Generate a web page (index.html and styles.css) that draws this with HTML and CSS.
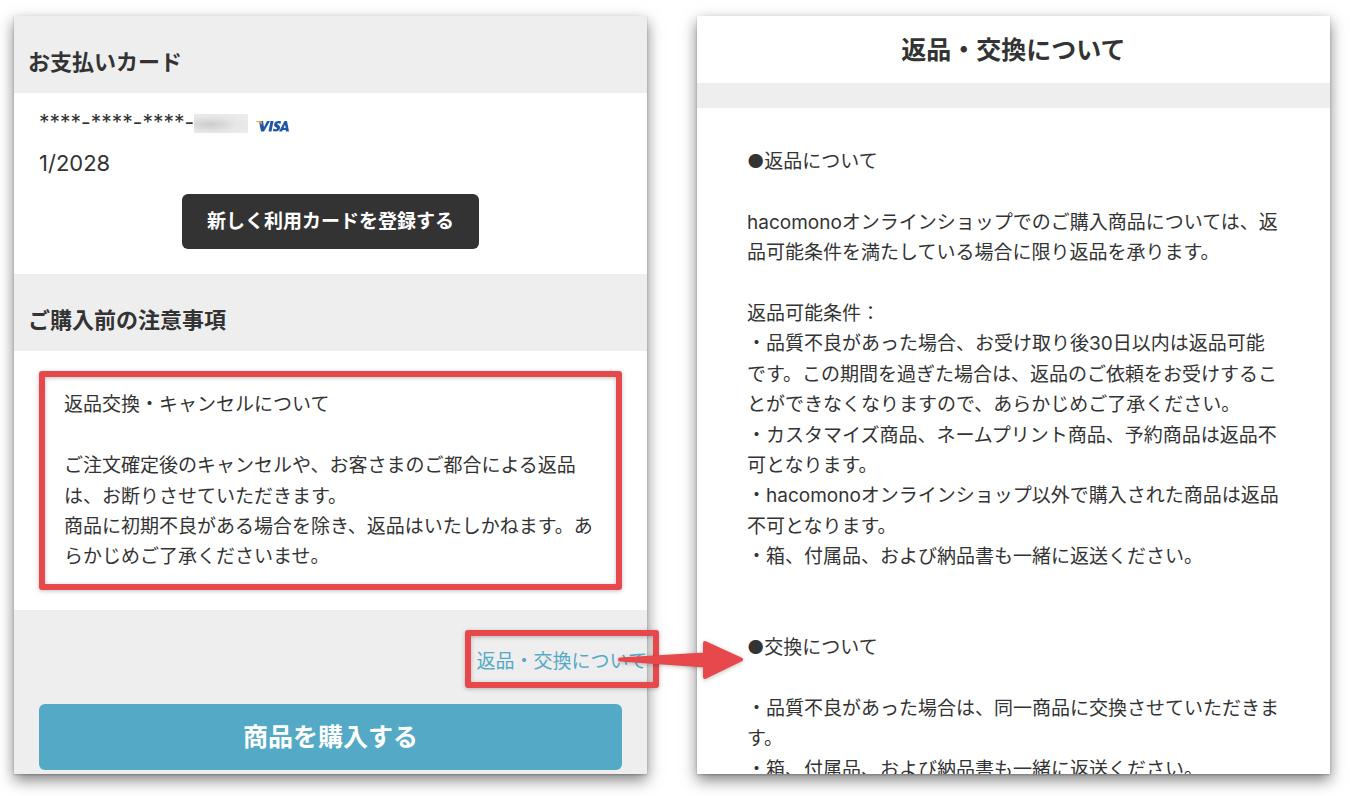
FILE: index.html
```html
<!DOCTYPE html>
<html lang="ja">
<head>
    <meta charset="UTF-8">
    <meta name="viewport" content="width=device-width, initial-scale=1.0">
    <title>返品・交換について</title>
    <link rel="stylesheet" href="styles.css">
</head>
<body>

<div class="container">
    <main class="panel">
        <h2 class="section-title">お支払いカード</h2>
        <section class="card-info">
            <div class="card-number">
                <span>****-****-****-</span>
                <span class="masked"></span>
                <svg class="visa" viewBox="0 0 34 12" role="img" aria-label="VISA">
                    <path fill="#1f56a8" d="M4 1h4l1 6 3-6h3L9 11.500H6zM15.500 1h3l-2 10.500h-3zM26 1.300l-.5 2.400c-1.500-.7-3.300-.7-3.400.1 0 .9 3.400 1.400 3 4.300-.5 3.300-4.200 4-7.200 3l.5-2.500c1.500.8 3.600.9 3.700-.1.100-1-3.400-1.300-3-4.200C19.600.900 23.300.400 26 1.300zM29.500 1H32l2 10.500h-3l-.2-1.500h-3l-.8 1.500h-3zM30 4.500L28.700 8h1.900z"/>
                    <path fill="#e5a33a" d="M1 1h5.500l1 4.500C6 3.500 4 2 1 1.500z"/>
                </svg>
            </div>
            <div>1/2028</div>
            <button type="button" class="btn-dark">新しく利用カードを登録する</button>
        </section>

        <h2 class="section-title">ご購入前の注意事項</h2>
        <section class="notice">
            <p>返品交換・キャンセルについて</p>
            <br>
            <p>ご注文確定後のキャンセルや、お客さまのご都合による返品は、お断りさせていただきます。</p>
            <p>商品に初期不良がある場合を除き、返品はいたしかねます。あらかじめご了承くださいませ。</p>
        </section>

        <footer class="purchase">
            <a href="#returns" class="returns-link">返品・交換について
                <svg class="arrow" viewBox="0 0 128 40" aria-hidden="true">
                    <path d="M3 19.500L88 14.500V3L124 19.500L88 37V25.500z"/>
                </svg>
            </a>
            <button type="button" class="btn-buy">商品を購入する</button>
        </footer>
    </main>

    <article class="panel policy" id="returns">
        <h1 class="policy-title">返品・交換について</h1>
        <div class="policy-body">
            <p>●返品について</p>
            <br>
            <p>hacomonoオンラインショップでのご購入商品については、返品可能条件を満たしている場合に限り返品を承ります。</p>
            <br>
            <p>返品可能条件：</p>
            <p>・品質不良があった場合、お受け取り後30日以内は返品可能です。この期間を過ぎた場合は、返品のご依頼をお受けすることができなくなりますので、あらかじめご了承ください。</p>
            <p>・カスタマイズ商品、ネームプリント商品、予約商品は返品不可となります。</p>
            <p>・hacomonoオンラインショップ以外で購入された商品は返品不可となります。</p>
            <p>・箱、付属品、および納品書も一緒に返送ください。</p>
            <br>
            <br>
            <p>●交換について</p>
            <br>
            <p>・品質不良があった場合は、同一商品に交換させていただきます。</p>
            <p>・箱、付属品、および納品書も一緒に返送ください。</p>
        </div>
    </article>
</div>

</body>
</html>
```

FILE: styles.css
```css
* {
    box-sizing: border-box;
}

body {
    font-family: Inter, "Noto Sans CJK JP", sans-serif;
    font-size: 19px;
    line-height: 1.6;
    color: #333;
    background-color: #fff;
    margin: 0;
}

h1,
h2,
p {
    margin: 0;
}

button {
    font-family: inherit;
    font-weight: bold;
    color: #fff;
    border: none;
    border-radius: 6px;
    cursor: pointer;
}

.container {
    display: grid;
    grid-template-columns: 1fr 1fr;
    gap: 50px;
    height: 100vh;
    padding: 16px 20px 22px 14px;
}

.panel {
    min-height: 0;
    background-color: #eee;
    box-shadow: 0 1px 2px rgba(0, 0, 0, 0.2), 0 6px 14px rgba(0, 0, 0, 0.5);
}

.section-title {
    font-size: 22px;
    padding: 29px 14px 13px;
}

.card-info {
    background-color: #fff;
    padding: 11px 25px 25px;
    font-size: 22px;
    line-height: 38px;
}

.card-number {
    display: flex;
    align-items: center;
    margin-bottom: 2px;
    font-size: 21px;
}

.masked {
    width: 54px;
    height: 19px;
    margin-right: 7px;
    background: radial-gradient(ellipse at 30% 55%, #ccc, #e6e6e6 50%, #eee);
}

.visa {
    width: 34px;
    height: 12px;
    margin-top: 6px;
}

.btn-dark {
    display: block;
    margin: 12px auto 0;
    padding: 12px 25px;
    font-size: 19px;
    line-height: 31px;
    background-color: #333;
}

.notice {
    position: relative;
    background-color: #fff;
    padding: 39px 50px 37px;
}

/* red highlight frames */
.notice::after,
.returns-link::after {
    content: "";
    position: absolute;
    border: 6px solid #e6484b;
    border-radius: 3px;
    filter: drop-shadow(0 1px 2px rgba(0, 0, 0, 0.25));
    pointer-events: none;
}

.notice::after {
    inset: 20px 25px;
}

.purchase {
    display: flex;
    flex-direction: column;
    align-items: flex-end;
    gap: 27px;
    padding-top: 37px;
}

.returns-link {
    position: relative;
    z-index: 1;
    color: #54aac6;
    text-decoration: none;
}

.returns-link::after {
    inset: -17px -12px -11px;
}

.arrow {
    position: absolute;
    left: 140px;
    top: -7px;
    z-index: 1;
    width: 128px;
    height: 40px;
    overflow: visible;
    fill: #e6484b;
    stroke: #e6484b;
    stroke-width: 4;
    stroke-linejoin: round;
    filter: drop-shadow(0 1px 2px rgba(0, 0, 0, 0.25));
}

.btn-buy {
    align-self: stretch;
    margin: 0 25px;
    padding: 13px;
    font-size: 25px;
    line-height: 40px;
    background-color: #54aac6;
}

.policy {
    overflow: hidden;
}

.policy-title {
    padding-top: 1px;
    font-size: 25px;
    line-height: 66px;
    text-align: center;
    background-color: #fff;
}

.policy-body {
    margin-top: 25px;
    padding: 39px 50px;
    background-color: #fff;
}
```
